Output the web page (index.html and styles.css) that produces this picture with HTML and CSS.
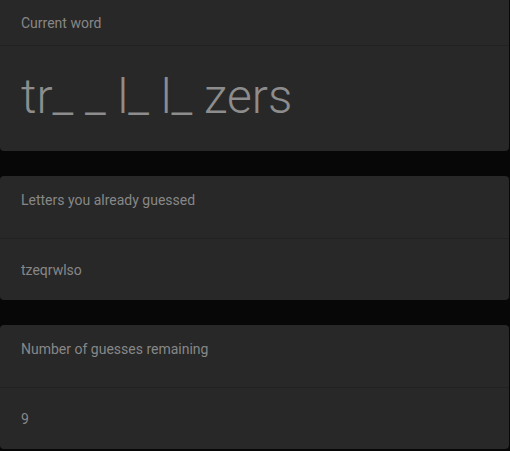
FILE: index.html
```html
<!DOCTYPE html>
<html>
<head>
<meta charset="utf-8">
<link rel="stylesheet" href="styles.css">
</head>
<body>
<main class="stack">
  <section class="card card-first">
    <header class="card-head head-short">Current word</header>
    <div class="card-body body-word">tr_ _ l_ l_ zers</div>
  </section>
  <section class="card">
    <header class="card-head">Letters you already guessed</header>
    <div class="card-body">tzeqrwlso</div>
  </section>
  <section class="card">
    <header class="card-head">Number of guesses remaining</header>
    <div class="card-body">9</div>
  </section>
</main>
</body>
</html>
```

FILE: styles.css
```css
html, body {
  margin: 0;
  padding: 0;
  background: #070707;
}
body {
  font-family: Roboto, "Liberation Sans", sans-serif;
  color: #878787;
  width: 510px;
  height: 451px;
  overflow: hidden;
}
.stack {
  display: flex;
  flex-direction: column;
  gap: 25px;
  width: 509px;
}
.card {
  background: #282828;
  border-radius: 4px;
  display: flex;
  flex-direction: column;
}
.card-first {
  border-radius: 0 0 4px 4px;
}
.card-head {
  box-sizing: border-box;
  height: 63px;
  padding: 16px 21px 0;
  font-size: 14px;
  line-height: 17px;
  border-bottom: 1px solid #212121;
}
.head-short {
  height: 46px;
  padding-top: 15px;
}
.card-body {
  box-sizing: border-box;
  height: 61px;
  padding: 0 21px;
  display: flex;
  align-items: center;
  font-size: 14px;
}
.body-word {
  height: 105px;
  font-size: 48px;
  font-weight: 300;
  color: #8d8d8d;
  padding-bottom: 4px;
}
```
